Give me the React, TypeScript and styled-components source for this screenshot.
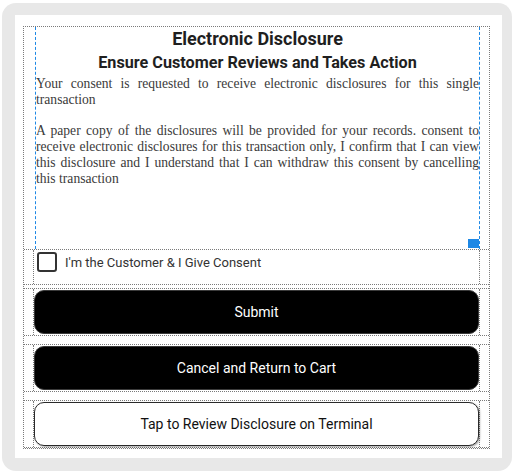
import React from 'react';
import styled, { createGlobalStyle } from 'styled-components';

const Global = createGlobalStyle`
  html, body { margin: 0; padding: 0; background: #ffffff; }
  body { font-family: Roboto, "Liberation Sans", Arial, sans-serif; }
  * { box-sizing: border-box; }
`;

const Page = styled.div`
  padding: 3px 0 0 2px;
`;

const Shell = styled.div`
  width: 510px;
  height: 468px;
  background: #e8e8e8;
  border-radius: 14px;
  padding: 12px 10px 13px 13px;
`;

const Screen = styled.div`
  width: 487px;
  height: 443px;
  background: #ffffff;
  padding: 11px 12px 9px 8px;
`;

const Frame = styled.div`
  height: 100%;
  border: 1px dotted #7a7a7a;
  display: flex;
  flex-direction: column;
`;

const ContentSection = styled.section`
  flex: none;
  height: 223px;
  border-bottom: 1px dotted #7a7a7a;
  display: flex;
`;

const Selected = styled.div`
  position: relative;
  flex: 1;
  margin: 0 9px 0 11px;
  border-left: 1px dashed #1e88e5;
  border-right: 1px dashed #1e88e5;
  padding-top: 1px;
  color: #222;
`;

const Handle = styled.span`
  position: absolute;
  right: 0;
  bottom: 1px;
  width: 11px;
  height: 9px;
  background: #1e88e5;
`;

const Title = styled.h1`
  margin: 0;
  font-size: 18px;
  line-height: 22px;
  font-weight: 700;
  text-align: center;
  color: #1f1f1f;
`;

const Subtitle = styled.h2`
  margin: 3px 0 0;
  font-size: 16.2px;
  line-height: 20px;
  font-weight: 700;
  text-align: center;
  color: #1f1f1f;
`;

const Body = styled.div`
  margin-top: 3px;
  font-family: "Liberation Serif", "Times New Roman", serif;
  font-size: 13.6px;
  line-height: 15.8px;
  color: #3a3a3a;
  text-align: justify;
`;

const Para = styled.p<{ $gap?: boolean }>`
  margin: ${(p) => (p.$gap ? '15.8px 0 0' : '0')};
`;

const Row = styled.div<{ $top?: number; $bordered?: boolean }>`
  flex: none;
  margin-top: ${(p) => p.$top ?? 0}px;
  border-top: ${(p) => (p.$bordered ? '1px dotted #7a7a7a' : 'none')};
  border-bottom: 1px dotted #7a7a7a;
`;

const RowInner = styled.div<{ $pad?: string }>`
  margin: 0 9px;
  border-left: 1px dotted #7a7a7a;
  border-right: 1px dotted #7a7a7a;
  padding: ${(p) => p.$pad ?? '1px 0'};
`;

const CheckLine = styled.label`
  display: flex;
  align-items: center;
  gap: 8px;
  height: 24px;
  padding-left: 3px;
  font-size: 13px;
  color: #333;
`;

const Box = styled.span`
  width: 20px;
  height: 20px;
  border: 2px solid #333;
  border-radius: 3px;
  flex: none;
`;

const Button = styled.button<{ $variant: 'dark' | 'light' }>`
  display: flex;
  width: 100%;
  height: 44px;
  align-items: center;
  justify-content: center;
  border-radius: 10px;
  font-family: Roboto, "Liberation Sans", Arial, sans-serif;
  font-size: 14px;
  cursor: pointer;
  background: ${(p) => (p.$variant === 'dark' ? '#000' : '#fff')};
  color: ${(p) => (p.$variant === 'dark' ? '#fff' : '#111')};
  border: ${(p) => (p.$variant === 'dark' ? '1px solid #3a3a3a' : '1.5px solid #2a2a2a')};
  box-shadow: ${(p) => (p.$variant === 'light' ? '1px 1px 2px rgba(0,0,0,0.35)' : 'none')};
`;

export default function App() {
  return (
    <>
      <Global />
      <Page>
        <Shell>
          <Screen>
            <Frame>
              <ContentSection>
                <Selected>
                  <Title>Electronic Disclosure</Title>
                  <Subtitle>Ensure Customer Reviews and Takes Action</Subtitle>
                  <Body>
                    <Para>
                      Your consent is requested to receive electronic disclosures for this single transaction
                    </Para>
                    <Para $gap>
                      A paper copy of the disclosures will be provided for your records. consent to receive
                      electronic disclosures for this transaction only, I confirm that I can view this
                      disclosure and I understand that I can withdraw this consent by cancelling this
                      transaction
                    </Para>
                  </Body>
                  <Handle />
                </Selected>
              </ContentSection>
              <Row>
                <RowInner $pad="0 0 10px">
                  <CheckLine>
                    <Box />
                    I'm the Customer &amp; I Give Consent
                  </CheckLine>
                </RowInner>
              </Row>
              <Row $top={3} $bordered>
                <RowInner>
                  <Button $variant="dark">Submit</Button>
                </RowInner>
              </Row>
              <Row $top={8} $bordered>
                <RowInner>
                  <Button $variant="dark">Cancel and Return to Cart</Button>
                </RowInner>
              </Row>
              <Row $top={8} $bordered>
                <RowInner>
                  <Button $variant="light">Tap to Review Disclosure on Terminal</Button>
                </RowInner>
              </Row>
            </Frame>
          </Screen>
        </Shell>
      </Page>
    </>
  );
}
